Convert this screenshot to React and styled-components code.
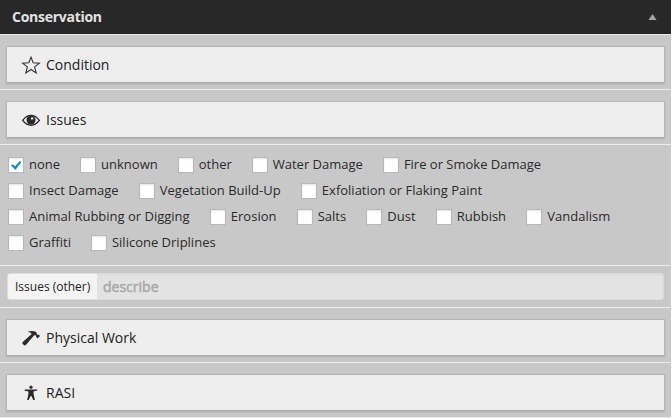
import React from "react";
import styled, { createGlobalStyle } from "styled-components";

const GlobalStyle = createGlobalStyle`
  * { box-sizing: border-box; }
  body {
    margin: 0;
    background: #fff;
    font-family: "Open Sans", sans-serif;
    overflow: hidden;
  }
`;

const Panel = styled.main`
  width: 671px;
  height: 418px;
  background: #c8c8c8;
`;

const Header = styled.header`
  display: flex;
  align-items: center;
  justify-content: space-between;
  height: 34px;
  padding: 0 14px 0 12px;
  background: #282828;
  border-bottom: 1px solid #231f23;
`;

const Title = styled.h1`
  margin: 0;
  color: #e2e2e2;
  font-size: 14px;
  font-weight: 700;
  line-height: 33px;
  letter-spacing: -0.27px;
`;

const Section = styled.section`
  height: ${(p) => p.$height || 55}px;
  padding: ${(p) => p.$padding || "11px 6px 0"};
  border-top: 1px solid #ececec;
`;

const SectionButton = styled.button`
  display: flex;
  align-items: center;
  gap: 5px;
  width: 659px;
  height: 37px;
  padding: 0 15px 0 14px;
  border: 1px solid #b5b5b5;
  border-bottom-color: #acacac;
  border-radius: 0;
  background: #eee;
  box-shadow: 0 1px 2px rgba(0, 0, 0, 0.14);
  color: #222;
  font: 400 14px/20px "Open Sans", sans-serif;
  text-align: left;
`;

const Icon = styled.svg`
  display: block;
  flex: none;
  width: 20px;
  height: 20px;
`;

const CheckRow = styled.div`
  display: flex;
  gap: ${(p) => p.$gap}px;
  height: 26px;
`;

const CheckLabel = styled.label`
  display: flex;
  gap: 5px;
  height: 16px;
  color: #2b2b2b;
  font-size: 13px;
  line-height: 15px;
  white-space: nowrap;
`;

const Box = styled.span`
  width: 16px;
  height: 16px;
  flex: none;
  border: 1px solid #b4b9be;
  background: #fff;
  box-shadow: inset 0 1px 2px rgba(0, 0, 0, 0.1);

  svg { display: block; width: 14px; height: 14px; }
`;

const Field = styled.div`
  display: flex;
  height: 27px;
  width: 657px;
  border: 1px solid #dcdcdc;
  border-radius: 3px;
  background: #e3e3e3;
  overflow: hidden;
`;

const FieldLabel = styled.label`
  width: 89px;
  padding-left: 7px;
  background: #f4f4f4;
  color: #222;
  font-size: 12px;
  line-height: 25px;
  white-space: nowrap;
`;

const FieldInput = styled.input`
  flex: 1;
  min-width: 0;
  padding: 0 6px;
  border: 0;
  outline: 0;
  background: #e3e3e3;
  box-shadow: inset 0 1px 2px rgba(0, 0, 0, 0.05);
  font: 400 14px/25px "Open Sans", sans-serif;

  &::placeholder {
    color: #a9a9a9;
    opacity: 1;
    -webkit-text-stroke: 0.5px #a9a9a9;
  }
`;

const StarIcon = () => (
  <Icon viewBox="0 0 20 20">
    <path d="M10 2.200l2.200 5.500 6.200.4-4.800 3.800 1.600 6-5.200-3.400-5.200 3.400 1.600-6L1.600 8.100l6.200-.4z" fill="none" stroke="#333" strokeWidth="1.100" />
  </Icon>
);

const EyeIcon = () => (
  <Icon viewBox="0 0 20 20">
    <path d="M1.700 10.300Q5.400 5.400 10 5.400t8.300 4.900Q14.600 15.200 10 15.200T1.700 10.300z" fill="none" stroke="#2a2a2a" strokeWidth="1.400" />
    <circle cx="10" cy="10" r="4.500" fill="#2a2a2a" />
    <circle cx="11.100" cy="8.400" r="1.200" fill="#eee" />
  </Icon>
);

const HammerIcon = () => (
  <Icon viewBox="0 0 20 20">
    <path d="M7.200 3.500Q11 2.400 14.200 3.500l1.500 1.300.1 1.500.9.700 1-.5 1.300 1.500-2.400 2.500-1.500-1.500.2-.9-.9-.9-1.200.1-8.300 9.700-1.500.6-2.100-2 .4-1.600 9-8q-.4-1.700-3.500-2z" fill="#2a2a2a" />
  </Icon>
);

const PersonIcon = () => (
  <Icon viewBox="0 0 20 20">
    <circle cx="10" cy="4.200" r="1.600" fill="#2a2a2a" />
    <path d="M3.700 6.500l4.300.1h4l4.300-.1v1.100l-3.800.8.200 3.200 1.200 5.400h-1.700L10.400 13h-.8l-1.900 4.100H6.100l1.200-5.400.2-3.200-3.800-.8z" fill="#2a2a2a" />
  </Icon>
);

const Arrow = styled.svg`
  width: 9px;
  height: 6px;
`;

const rows = [
  { gap: 20, names: ["none", "unknown", "other", "Water Damage", "Fire or Smoke Damage"] },
  { gap: 20.2, names: ["Insect Damage", "Vegetation Build-Up", "Exfoliation or Flaking Paint"] },
  { gap: 20.2, names: ["Animal Rubbing or Digging", "Erosion", "Salts", "Dust", "Rubbish", "Vandalism"] },
  { gap: 20, names: ["Graffiti", "Silicone Driplines"] },
];

const Check = ({ name, checked }) => (
  <CheckLabel>
    <Box role="checkbox" aria-checked={!!checked} aria-label={name}>
      {checked && (
        <svg viewBox="0 0 14 14">
          <path d="M2 7.500l1.700-1.300 2.300 2 4.700-5.200 1.700 1.200-6 7.700z" fill="#1e8cbe" />
        </svg>
      )}
    </Box>
    {name}
  </CheckLabel>
);

export default function App() {
  return (
    <>
      <GlobalStyle />
      <Panel>
        <Header>
          <Title>Conservation</Title>
          <Arrow viewBox="0 0 9 6">
            <path d="M4.500 0L8.500 6H.5z" fill="#a0a5aa" />
          </Arrow>
        </Header>
        <Section>
          <SectionButton><StarIcon />Condition</SectionButton>
        </Section>
        <Section>
          <SectionButton><EyeIcon />Issues</SectionButton>
        </Section>
        <Section $height={121} $padding="12px 8px 0">
          {rows.map(({ gap, names }) => (
            <CheckRow key={names[0]} $gap={gap}>
              {names.map((name) => (
                <Check key={name} name={name} checked={name === "none"} />
              ))}
            </CheckRow>
          ))}
        </Section>
        <Section $height={42} $padding="7px 7px 0">
          <Field>
            <FieldLabel htmlFor="issues-other">Issues (other)</FieldLabel>
            <FieldInput id="issues-other" placeholder="describe" />
          </Field>
        </Section>
        <Section>
          <SectionButton><HammerIcon />Physical Work</SectionButton>
        </Section>
        <Section>
          <SectionButton><PersonIcon />RASI</SectionButton>
        </Section>
        <Section $height={1} $padding="0" />
      </Panel>
    </>
  );
}
